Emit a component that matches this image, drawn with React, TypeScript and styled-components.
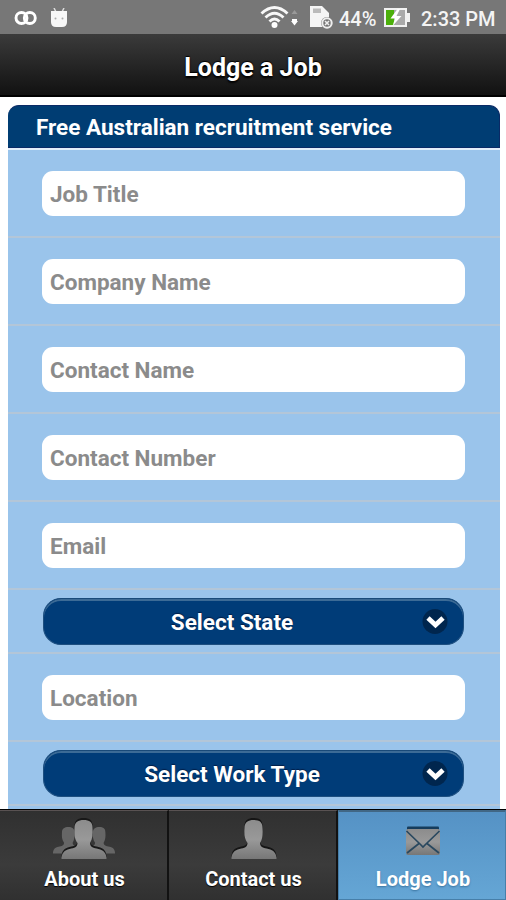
import React from 'react';
import styled, { createGlobalStyle, css } from 'styled-components';

const GlobalStyle = createGlobalStyle`
  * { box-sizing: border-box; }
  body { margin: 0; background: #fff; font-family: Roboto, sans-serif; }
`;

const Screen = styled.div`
  display: flex;
  flex-direction: column;
  width: 506px;
  height: 900px;
  overflow: hidden;
  background: #fff;
`;

const StatusBar = styled.div`
  display: flex;
  align-items: center;
  flex: 0 0 34px;
  padding: 0 12px 0 14px;
  background: #777;
  color: #f4f4f4;
`;

const Notifications = styled.div`
  display: flex;
  align-items: center;
  gap: 12px;
  flex: 1;
  padding-top: 1px;
`;

const StatusText = styled.span<{ $width: number }>`
  width: ${(p) => p.$width}px;
  padding-top: 4px;
  font-size: 20px;
  line-height: 30px;
  font-weight: 500;
  white-space: nowrap;
`;

const StatusIcon = styled.svg<{ $gap?: number }>`
  display: block;
  flex: none;
  margin-right: ${(p) => p.$gap ?? 0}px;
`;

const Header = styled.header`
  flex: 0 0 63px;
  height: 63px;
  display: flex;
  justify-content: center;
  padding-top: 3px;
  background: linear-gradient(#3b3b3b, #111);
  border-bottom: 2px solid #000;
`;

const Title = styled.h1`
  margin: 0;
  font-size: 25px;
  line-height: 58px;
  padding-top: 2px;
  height: 58px;
  font-weight: 700;
  color: #fff;
  text-shadow: 0 -1px 1px #000, 0 2px 2px #000;
`;

const Content = styled.main`
  display: flex;
  flex-direction: column;
  flex: 1;
  min-height: 0;
  overflow: hidden;
  padding: 8px 6px 0 8px;
`;

const PanelTitle = styled.h2`
  margin: 0;
  flex: 0 0 43px;
  height: 43px;
  padding-left: 28px;
  border: 1px solid #0a2a66;
  border-left: 0;
  border-radius: 11px 11px 0 0;
  background: #003d73;
  color: #fff;
  font-size: 22.5px;
  line-height: 43px;
  font-weight: 700;
`;

const Rows = styled.form`
  flex: 1 0 auto;
  border-top: 2px solid #e3eefa;
  background: #9ac4eb;
`;

const Row = styled.div<{ $kind: 'input' | 'select' }>`
  display: flex;
  align-items: flex-start;
  height: ${(p) => (p.$kind === 'input' ? 88 : 64)}px;
  padding: ${(p) => (p.$kind === 'input' ? '21px 35px 0 34px' : '8px 36px 0 35px')};
  border-bottom: 2px solid #b3c6d8;
`;

const Field = styled.input`
  width: 100%;
  height: 45px;
  padding: 1px 8px 1px;
  border: 0;
  border-radius: 11px;
  background: #fff;
  font: 700 22.5px Roboto, sans-serif;
  color: #333;
  outline: 0;
  &::placeholder { color: #8b8b8b; opacity: 1; }
`;

const SelectButton = styled.button`
  display: grid;
  grid-template-columns: 1fr 26px;
  align-items: center;
  width: 100%;
  height: 47px;
  padding: 0 15px 0 0;
  border: 1px solid #1d4f80;
  border-top-color: #194a79;
  border-radius: 18px;
  background: #003c78;
  box-shadow: inset 0 2px 0 #3c6b96;
  color: #fff;
  font: 700 22.5px Roboto, sans-serif;
  text-shadow: 0 -1px 1px #001e48;
`;

const SelectLabel = styled.span`
  padding: 0 2px 0 0;
  text-align: center;
`;

const TabBar = styled.nav`
  display: grid;
  grid-template-columns: 169px 169px 168px;
  flex: 0 0 91px;
  border-top: 1px solid #000;
`;

const Tab = styled.a<{ $active?: boolean }>`
  display: flex;
  flex-direction: column;
  align-items: center;
  padding-top: 5px;
  border-top: 1px solid #595252;
  border-right: 2px solid #121212;
  background: linear-gradient(#303030, #3b3b3b 60%, #303030) padding-box;
  color: #fff;
  font-size: 20px;
  font-weight: 700;
  line-height: 26px;
  text-shadow: 0 1px 1px #000;
  ${(p) =>
    p.$active &&
    css`
      border: 1px solid #477fa9;
      border-top: 2px solid #416785;
      padding-top: 4px;
      background: linear-gradient(#5592c5, #65a6d5);
      text-shadow: 0 1px 2px #3a739f;
    `}
`;

const TabIcon = styled.svg`
  display: block;
  height: 50px;
  flex: none;
`;

const TabLabel = styled.span`
  padding-left: 2px;
`;

const person =
  'M0 39 C0 33 3 30 8 29 C13 28 16 27 16 23 C13 19 12.500 14 13 8 C13 2 17 0 22 0 C28 0 31 2 31 8 C31.500 14 31 19 28.500 23 C28.500 27 32 28 37 29 C42 30 45 33 45 39 Z';

const Gradient = ({ id }: { id: string }) => (
  <linearGradient id={id} x1="0" y1="0" x2="0" y2="1">
    <stop offset="0" stopColor="#8c8c8c" />
    <stop offset=".5" stopColor="#999" />
    <stop offset="1" stopColor="#777" />
  </linearGradient>
);

const PeopleIcon = () => (
  <TabIcon width="70" height="50" viewBox="0 0 70 50">
    <defs><Gradient id="people" /></defs>
    <g fill="#666">
      <path d={person} transform="translate(4 11) scale(.69 .68)" />
      <path d={person} transform="translate(35 11) scale(.69 .68)" />
    </g>
    <path d={person} fill="#181818" transform="translate(12.500 2)" />
    <path d={person} fill="url(#people)" transform="translate(12.500 4)" />
  </TabIcon>
);

const PersonIcon = () => (
  <TabIcon width="50" height="50" viewBox="0 0 50 50">
    <defs><Gradient id="person" /></defs>
    <path d={person} fill="#151515" transform="translate(3.500 2)" />
    <path d={person} fill="url(#person)" transform="translate(3.500 4)" />
  </TabIcon>
);

const MailIcon = () => (
  <TabIcon width="40" height="50" viewBox="0 0 40 50">
    <defs><Gradient id="mail" /></defs>
    <rect x="5" y="10.500" width="32" height="8" rx="1" fill="#153c5c" />
    <rect x="4" y="13" width="34" height="26" rx="2" fill="url(#mail)" />
    <path d="M4.500 15 L18 28 L21 31 L24 28 L37.500 15 M5 37 L17 27.500 M37 37 L25 27.500" fill="none" stroke="#29485f" strokeWidth="1.700" />
  </TabIcon>
);

const Chevron = () => (
  <svg width="26" height="26" viewBox="0 0 26 26">
    <circle cx="13" cy="12.500" r="12.500" fill="#00264e" />
    <path d="M6 9 L13.500 16 L21 9" fill="none" stroke="#fff" strokeWidth="4.800" />
  </svg>
);

const RingsIcon = () => (
  <StatusIcon width="24" height="18" viewBox="0 0 24 18">
    <g fill="none" stroke="#fff" strokeWidth="2.900">
      <circle cx="7.500" cy="9" r="5.500" />
      <circle cx="15.800" cy="9" r="5.500" />
    </g>
  </StatusIcon>
);

const RobotIcon = () => (
  <StatusIcon width="18" height="20" viewBox="0 0 18 20">
    <path d="M4 0 L6 4 M14 0 L12 4" stroke="#ddd" strokeWidth="1.500" />
    <path d="M1 3 H17 V14 Q17 19 12 19 H6 Q1 19 1 14 Z" fill="#f7f7f7" />
    <circle cx="5.500" cy="10.500" r="1" fill="#aaa" />
    <circle cx="12.500" cy="10.500" r="1" fill="#aaa" />
  </StatusIcon>
);

const WifiIcon = () => (
  <StatusIcon $gap={10} width="40" height="24" viewBox="0 0 40 24">
    <g fill="none" stroke="#f8f8f8" strokeWidth="2.900">
      <path d="M2.500 8.500 Q15.500 -3.500 28.500 8.500" />
      <path d="M6.500 12.500 Q15.500 4 24.500 12.500" />
      <path d="M10.500 16.500 Q15.500 11.500 20.500 16.500" />
    </g>
    <circle cx="15.500" cy="20" r="3" fill="#fff" />
    <path d="M32.500 9 L35.500 5 L38.500 9 Z" fill="#999" />
    <path d="M33 14 H38 V16 H39 L35.500 20.500 L32 16 H33 Z" fill="#fff" />
  </StatusIcon>
);

const SimIcon = () => (
  <StatusIcon $gap={6} width="24" height="24" viewBox="0 0 24 24">
    <path d="M1 1 H13 L20 8 V22 H1 Z" fill="#f5f5f5" />
    <path d="M4 3.500 H12 V8 H4 Z" fill="#bbb" />
    <circle cx="18" cy="18" r="6" fill="#777" />
    <circle cx="18" cy="18" r="4.700" fill="none" stroke="#eee" strokeWidth="2" />
    <path d="M16 16 L20 20 M20 16 L16 20" stroke="#eee" strokeWidth="1.600" />
  </StatusIcon>
);

const BatteryIcon = () => (
  <StatusIcon $gap={10} width="28" height="22" viewBox="0 0 28 22">
    <path d="M1 2 H24 V7 H27 V16 H24 V21 H1 Z" fill="#f2f2f2" />
    <rect x="3" y="4" width="19" height="15" fill="#aaa" />
    <rect x="3" y="4" width="8" height="15" fill="#4caf0b" />
    <path d="M14.500 3 L7.500 12.500 H12 L9.500 20 L18.500 10 H13.500 L17 3 Z" fill="#fff" />
  </StatusIcon>
);

type FormRow = { kind: 'input' | 'select'; label: string };

const rows: FormRow[] = [
  { kind: 'input', label: 'Job Title' },
  { kind: 'input', label: 'Company Name' },
  { kind: 'input', label: 'Contact Name' },
  { kind: 'input', label: 'Contact Number' },
  { kind: 'input', label: 'Email' },
  { kind: 'select', label: 'Select State' },
  { kind: 'input', label: 'Location' },
  { kind: 'select', label: 'Select Work Type' },
];

export default function App() {
  return (
    <>
      <GlobalStyle />
      <Screen>
        <StatusBar>
          <Notifications>
            <RingsIcon />
            <RobotIcon />
          </Notifications>
          <WifiIcon />
          <SimIcon />
          <StatusText $width={44}>44%</StatusText>
          <BatteryIcon />
          <StatusText $width={73}>2:33 PM</StatusText>
        </StatusBar>
        <Header>
          <Title>Lodge a Job</Title>
        </Header>
        <Content>
          <PanelTitle>Free Australian recruitment service</PanelTitle>
          <Rows>
            {rows.map(({ kind, label }) => (
              <Row key={label} $kind={kind}>
                {kind === 'input' ? (
                  <Field placeholder={label} />
                ) : (
                  <SelectButton type="button">
                    <SelectLabel>{label}</SelectLabel>
                    <Chevron />
                  </SelectButton>
                )}
              </Row>
            ))}
          </Rows>
        </Content>
        <TabBar>
          <Tab><PeopleIcon /><TabLabel>About us</TabLabel></Tab>
          <Tab><PersonIcon /><TabLabel>Contact us</TabLabel></Tab>
          <Tab $active><MailIcon /><TabLabel>Lodge Job</TabLabel></Tab>
        </TabBar>
      </Screen>
    </>
  );
}
